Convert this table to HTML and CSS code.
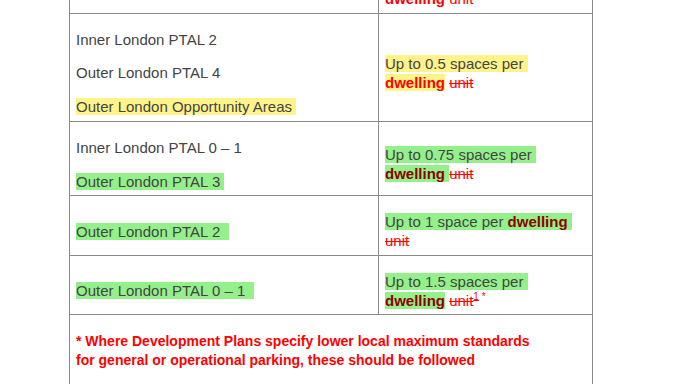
FILE: index.html
```html
<!DOCTYPE html>
<html lang="en">
<head>
<meta charset="utf-8">
<title>Residential parking standards</title>
<link rel="stylesheet" href="styles.css">
</head>
<body>
<div class="page">
  <table class="parking">
    <colgroup><col class="col-area"><col class="col-std"></colgroup>
    <tr>
      <td><p>Inner London PTAL 3</p></td>
      <td><p>Up to 0.25 spaces per<br><b class="dw">dwelling</b> <s class="del">unit</s></p></td>
    </tr>
    <tr>
      <td>
        <p>Inner London PTAL 2</p>
        <p>Outer London PTAL 4</p>
        <p><span class="hl-y">Outer London Opportunity Areas&nbsp;</span></p>
      </td>
      <td><p><span class="hl-y">Up to 0.5 spaces per&nbsp;</span><br><span class="hl-y"><b class="dw">dwelling</b></span> <s class="del">unit</s></p></td>
    </tr>
    <tr>
      <td>
        <p>Inner London PTAL 0 – 1</p>
        <p><span class="hl-g">Outer London PTAL 3&nbsp;</span></p>
      </td>
      <td><p><span class="hl-g">Up to 0.75 spaces per&nbsp;</span><br><span class="hl-g"><b class="dw-dark">dwelling</b>&nbsp;</span><s class="del">unit</s></p></td>
    </tr>
    <tr>
      <td><p><span class="hl-g">Outer London PTAL 2&nbsp;&nbsp;</span></p></td>
      <td><p><span class="hl-g">Up to 1 space per <b class="dw-dark">dwelling</b>&nbsp;</span><br><s class="del">unit</s></p></td>
    </tr>
    <tr>
      <td><p><span class="hl-g">Outer London PTAL 0 – 1&nbsp;&nbsp;</span></p></td>
      <td><p><span class="hl-g">Up to 1.5 spaces per&nbsp;</span><br><span class="hl-g"><b class="dw-dark">dwelling</b></span> <s class="del">unit<sup>1</sup></s><sup class="note"> *</sup></p></td>
    </tr>
    <tr>
      <td class="footnote" colspan="2"><p>* Where Development Plans specify lower local maximum standards<br>for general or operational parking, these should be followed</p></td>
    </tr>
  </table>
</div>
</body>
</html>
```
FILE: styles.css
```css
html, body {
  margin: 0;
  padding: 0;
  background: #ffffff;
}

.page {
  padding-left: 69px;
  font-family: "Liberation Sans", Arial, sans-serif;
  color: #444444;
}

.parking {
  border-collapse: collapse;
  table-layout: fixed;
  width: 523px;
  margin-top: -47px;
}

.col-area { width: 309px; }
.col-std { width: 214px; }

.parking td {
  border: 1px solid #8a8a8a;
  padding: 2px 6px 4px 6px;
  vertical-align: middle;
  font-size: 15px;
  line-height: 18.75px;
}

.parking p {
  margin: 15px 0 0 0;
}

.hl-y { background: #fff38a; }
.hl-g { background: #93f08a; }

.dw {
  color: #ff0000;
  font-weight: bold;
}

.dw-dark {
  color: #8e0000;
  font-weight: bold;
}

.del {
  color: #ff0000;
  text-decoration: line-through;
}

.del sup,
.note {
  font-size: 10px;
  line-height: 0;
  vertical-align: super;
  color: #ff0000;
}

.parking td.footnote {
  vertical-align: top;
  padding-bottom: 30px;
  font-size: 14px;
  line-height: 18.3px;
  font-weight: bold;
  color: #ff0000;
}
```
